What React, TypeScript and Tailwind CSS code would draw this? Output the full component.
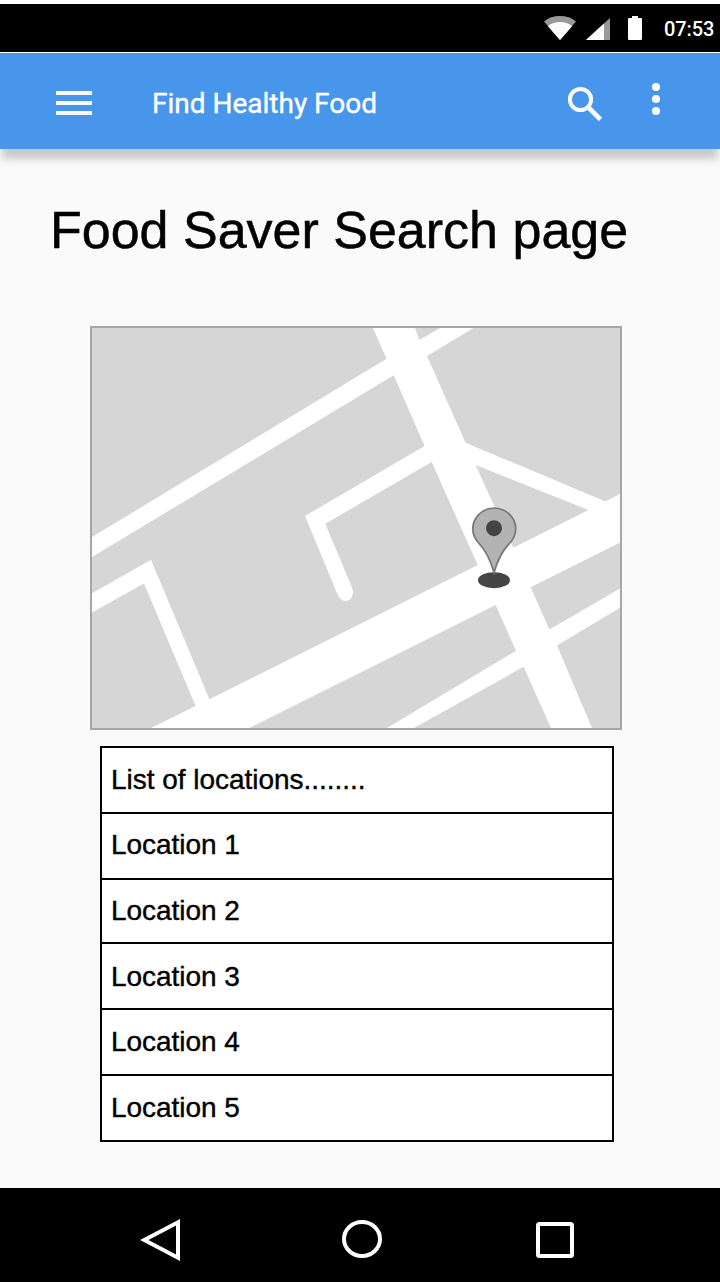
const rows = [
  { label: "List of locations........", style: "h-[66px] pt-[17px]" },
  { label: "Location 1", style: "h-[66px] pt-[16px]" },
  { label: "Location 2", style: "h-[64px] pt-[16px]" },
  { label: "Location 3", style: "h-[66px] pt-[18px]" },
  { label: "Location 4", style: "h-[66px] pt-[17px]" },
  { label: "Location 5", style: "h-[66px] pt-[17px]" },
];

const blocks = [
  "92,328 373,328 386.5,358.7 92,537",
  "415,328 440,328 419.4,340",
  "473.5,328 620,328 620,494 605.5,501.4 465.5,442.8 427,356",
  "475.6,465 588.5,510 513.3,547.8 511.5,544",
  "92,612.6 144,583.4 195.6,706 151,728 92,728",
  "249.5,728 495.6,605 516,650.7 387,728",
  "414,728 523.6,666.8 551,728",
  "530.6,587.3 620,542.4 620,588.4 549.4,629.5",
  "557,645.4 620,607.8 620,728 592,728",
];

function StatusBar() {
  return (
    <div className="flex h-12 shrink-0 items-center justify-end bg-black pr-1.5 text-white">
      <svg className="h-12 w-[110px]" viewBox="540 4 110 48">
        <path d="M544 21.5C548.5 17.8 554 16 560 16s11.500 1.800 16 5.500L560 40z" fill="#999" />
        <path d="M548 26.200C551.500 23.300 555.600 22 560 22s8.500 1.300 12 4.200L560 40z" fill="#fff" />
        <path d="M610 18v22h-24z" fill="#999" />
        <path d="M604 23.500V40h-18z" fill="#fff" />
        <path d="M632 16h6v2h3a1 1 0 0 1 1 1v20a1 1 0 0 1-1 1h-12a1 1 0 0 1-1-1V19a1 1 0 0 1 1-1h3z" fill="#fff" />
      </svg>
      <span className="ml-[14px] w-[50px] whitespace-nowrap pt-0.5 text-[20px] leading-6 font-medium tracking-[-0.1px]">
        07:53
      </span>
    </div>
  );
}

function AppBar() {
  return (
    <header className="relative z-10 mt-px flex h-24 shrink-0 items-center bg-[#4796eb] text-white shadow-[0_12px_8px_-2px_rgba(0,0,0,0.2)]">
      <svg className="mt-1 ml-14 h-6 w-9" viewBox="0 0 36 24" fill="#fafafa">
        <path d="M0 0h36v4H0zM0 10h36v4H0zM0 20h36v4H0z" />
      </svg>
      <h1 className="ml-[60px] pt-1.5 text-[28px] leading-8 whitespace-nowrap [-webkit-text-stroke:0.4px_white]">
        Find Healthy Food
      </h1>
      <svg className="ml-auto h-24 w-[160px]" viewBox="560 53 160 96">
        <circle cx="580.500" cy="99.500" r="10.600" fill="none" stroke="#fafafa" strokeWidth="4" />
        <path d="M588.500 107.500L600.500 119.500" stroke="#fafafa" strokeWidth="4.600" />
        <g fill="#fafafa">
          <circle cx="656" cy="87" r="4.100" />
          <circle cx="656" cy="99" r="4.100" />
          <circle cx="656" cy="111" r="4.100" />
        </g>
      </svg>
    </header>
  );
}

function LocationMap() {
  return (
    <div className="ml-[90px] h-[404px] w-[532px] border-2 border-[#a6a6a6] bg-white">
      <svg className="block h-[400px] w-[528px]" viewBox="92 328 528 400">
        <g fill="#d6d6d6">
          {blocks.map((points) => (
            <polygon key={points} points={points} />
          ))}
          <path d="M92 557L393.700 375.300L424.600 446L305 516L338 595.500C341 602.500 350 602.500 352 596.500C353.200 593.500 353 590.500 352 587.500L325.300 523.800L431.700 462L477.700 565L209.400 699.300L151 559.700L92 593.300z" />
        </g>
        <ellipse cx="494" cy="580.200" rx="16" ry="8" fill="#444" />
        <path
          d="M494 508.200C506.500 508.200 515.700 517.600 515.700 529C515.700 535 512.800 540 509 544C501 552 497 562 494 572.500C491 562 487 552 479.500 544C475.800 540 472.800 535 472.800 529C472.800 517.600 482 508.200 494 508.200z"
          fill="#b3b3b3"
          stroke="#7a7a7a"
          strokeWidth="1.800"
        />
        <circle cx="494" cy="528.200" r="8" fill="#444" />
      </svg>
    </div>
  );
}

function NavigationBar() {
  return (
    <nav className="h-[94px] shrink-0 bg-black">
      <svg className="block h-[94px] w-full" viewBox="0 1188 720 94" fill="none" stroke="#fff" strokeWidth="4">
        <path d="M144.300 1240L178 1222.200V1257.800z" />
        <ellipse cx="362" cy="1239" rx="18" ry="17" />
        <rect x="538" y="1224" width="34" height="32" rx="1.500" />
      </svg>
    </nav>
  );
}

export default function App() {
  return (
    <div className="flex h-[1282px] w-[720px] flex-col overflow-hidden bg-white pt-1 font-['Roboto',sans-serif]">
      <StatusBar />
      <AppBar />
      <main className="h-[1039px] shrink-0 bg-[#fafafa] pt-[51px] font-['Liberation_Sans',sans-serif] text-black">
        <h2 className="ml-[50px] h-[126px] text-[52px] leading-[60px] whitespace-nowrap [-webkit-text-stroke:0.5px_black]">
          Food Saver Search page
        </h2>
        <LocationMap />
        <ul className="mt-4 ml-[100px] w-[514px] border-2 border-t-0 border-black bg-white">
          {rows.map((row) => (
            <li
              key={row.label}
              className={`${row.style} border-t-2 border-black pl-[9px] text-[28px] leading-[30px] tracking-[-0.03px] whitespace-nowrap [-webkit-text-stroke:0.4px_black]`}
            >
              {row.label}
            </li>
          ))}
        </ul>
      </main>
      <NavigationBar />
    </div>
  );
}
